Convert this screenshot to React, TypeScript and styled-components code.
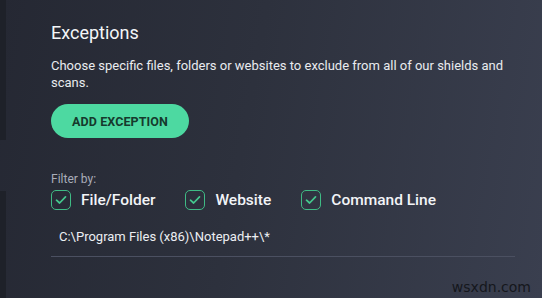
import styled, { createGlobalStyle } from "styled-components";

const GlobalStyle = createGlobalStyle`
  html, body {
    margin: 0;
    padding: 0;
    background: #2b2f3b;
  }
  * {
    box-sizing: border-box;
  }
`;

const Screen = styled.div`
  position: relative;
  display: flex;
  width: 542px;
  height: 298px;
  overflow: hidden;
  background: linear-gradient(100deg, #252833 0%, #2d313d 45%, #3a3f4f 100%);
  font-family: Roboto, "Liberation Sans", Arial, sans-serif;
`;

const Rail = styled.div`
  display: flex;
  flex-direction: column;
  width: 6px;
  flex-shrink: 0;
`;

const RailPiece = styled.div<{ $h: number; $dark: boolean }>`
  height: ${(p) => p.$h}px;
  background: ${(p) => (p.$dark ? "#1e2129" : "transparent")};
`;

const Content = styled.div`
  display: flex;
  flex-direction: column;
  padding: 21px 0 0 45px;
  width: 509px;
`;

const Title = styled.h1`
  margin: 0;
  font-size: 18px;
  font-weight: 400;
  color: #f4f6f8;
  line-height: 24px;
`;

const Description = styled.p`
  margin: 12px 0 0;
  font-size: 13px;
  line-height: 17px;
  color: #e9ebef;
  max-width: 460px;
`;

const PrimaryButton = styled.button`
  margin-top: 13px;
  width: 138px;
  height: 34px;
  border: none;
  border-radius: 17px;
  background: #4dd9a1;
  color: #163a2d;
  font-family: inherit;
  font-size: 12.5px;
  font-weight: 700;
  letter-spacing: 0.1px;
  cursor: pointer;
`;

const FilterLabel = styled.div`
  margin-top: 34px;
  font-size: 12px;
  line-height: 14px;
  color: #a9adb9;
`;

const FilterRow = styled.div`
  display: flex;
  align-items: center;
  gap: 30px;
  margin-top: 4px;
`;

const Option = styled.label`
  display: flex;
  align-items: center;
  gap: 10px;
  font-size: 15.5px;
  font-weight: 500;
  color: #f2f4f7;
`;

const Box = styled.span`
  display: flex;
  align-items: center;
  justify-content: center;
  width: 20px;
  height: 20px;
  border: 1.5px solid #3fbb85;
  border-radius: 5px;
`;

const PathRow = styled.div`
  margin-top: 18px;
  padding: 0 0 11px 8px;
  width: 464px;
  border-bottom: 1px solid #4b5061;
  font-size: 13px;
  line-height: 17px;
  color: #eceef2;
`;

const Watermark = styled.div`
  position: absolute;
  right: 11px;
  bottom: 3px;
  font-family: "DejaVu Sans", Verdana, sans-serif;
  font-size: 14px;
  color: #15171c;
`;

function Check() {
  return (
    <svg width="12" height="10" viewBox="0 0 12 10">
      <path
        d="M1.5 5.2 L4.6 8 L10.5 1.8"
        fill="none"
        stroke="#44c98e"
        strokeWidth="1.7"
        strokeLinecap="round"
        strokeLinejoin="round"
      />
    </svg>
  );
}

const filters = ["File/Folder", "Website", "Command Line"];

export default function App() {
  return (
    <>
      <GlobalStyle />
      <Screen>
        <Rail>
          <RailPiece $h={140} $dark />
          <RailPiece $h={51} $dark={false} />
          <RailPiece $h={107} $dark />
        </Rail>
        <Content>
          <Title>Exceptions</Title>
          <Description>
            Choose specific files, folders or websites to exclude from all of our shields and scans.
          </Description>
          <div>
            <PrimaryButton>ADD EXCEPTION</PrimaryButton>
          </div>
          <FilterLabel>Filter by:</FilterLabel>
          <FilterRow>
            {filters.map((f) => (
              <Option key={f}>
                <Box>
                  <Check />
                </Box>
                {f}
              </Option>
            ))}
          </FilterRow>
          <PathRow>C:\Program Files (x86)\Notepad++\*</PathRow>
        </Content>
        <Watermark>wsxdn.com</Watermark>
      </Screen>
    </>
  );
}
